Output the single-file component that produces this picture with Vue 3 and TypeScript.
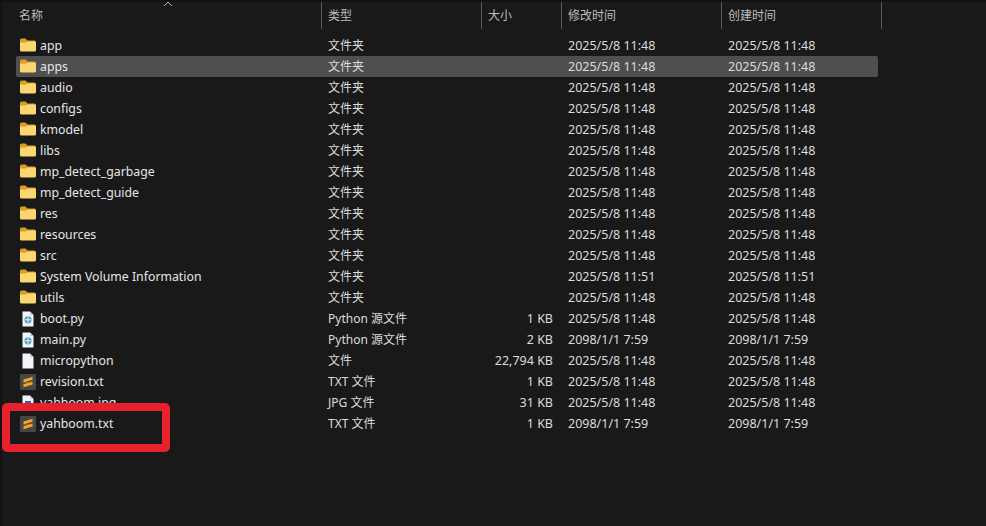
<script setup lang="ts">
type Kind = 'folder' | 'py' | 'file' | 'txt' | 'jpg'

interface Row {
  name: string
  kind: Kind
  type: string
  size?: string
  modified: string
  created: string
}

const stamp = '2025/5/8 11:48'
const old = '2098/1/1 7:59'

const folders = ['app', 'apps', 'audio', 'configs', 'kmodel', 'libs', 'mp_detect_garbage', 'mp_detect_guide', 'res', 'resources', 'src', 'System Volume Information', 'utils']

const rows: Row[] = [
  ...folders.map((name): Row => {
    const time = name.startsWith('System') ? '2025/5/8 11:51' : stamp
    return { name, kind: 'folder', type: '文件夹', modified: time, created: time }
  }),
  { name: 'boot.py', kind: 'py', type: 'Python 源文件', size: '1 KB', modified: stamp, created: stamp },
  { name: 'main.py', kind: 'py', type: 'Python 源文件', size: '2 KB', modified: old, created: old },
  { name: 'micropython', kind: 'file', type: '文件', size: '22,794 KB', modified: stamp, created: stamp },
  { name: 'revision.txt', kind: 'txt', type: 'TXT 文件', size: '1 KB', modified: stamp, created: stamp },
  { name: 'yahboom.jpg', kind: 'jpg', type: 'JPG 文件', size: '31 KB', modified: stamp, created: stamp },
  { name: 'yahboom.txt', kind: 'txt', type: 'TXT 文件', size: '1 KB', modified: old, created: old },
]

const columns = ['名称', '类型', '大小', '修改时间', '创建时间']
</script>

<template>
  <div class="explorer">
    <header class="head">
      <div v-for="col in columns" :key="col" class="head-cell">{{ col }}</div>
      <svg class="sort" width="10" height="6" viewBox="0 0 10 6" aria-hidden="true">
        <path d="M1 5 L5 1 L9 5" fill="none" stroke="#b0b0b0" stroke-width="1" />
      </svg>
    </header>

    <main class="list">
      <div v-for="row in rows" :key="row.name" class="row" :class="{ selected: row.name === 'apps' }">
        <div class="name">
          <svg class="icon" width="16" height="16" viewBox="0 0 16 16" aria-hidden="true">
            <template v-if="row.kind === 'folder'">
              <path d="M0 2 Q0 0.500 1.500 0.500 H5.500 L7.500 2.500 H14.500 Q16 2.500 16 4 V5 H0 Z" fill="#d99f22" />
              <path d="M0 4.500 L6 4.500 L7.500 3.500 H14.500 Q16 3.500 16 5 V12 Q16 13.500 14.500 13.500 H1.500 Q0 13.500 0 12 Z" fill="#fbd671" />
            </template>
            <template v-else-if="row.kind === 'txt'">
              <rect x="0" y="0" width="16" height="16" rx="1" fill="#474747" />
              <path d="M3.500 5.500 L12.500 2.800 V5.800 L3.500 8.500 Z" fill="#f5a428" />
              <path d="M3.500 8 L12.500 9 V10.500 L3.500 8.500 Z" fill="#b56f12" />
              <path d="M3.500 10.300 L12.500 7.500 V10.500 L3.500 13.300 Z" fill="#f5a428" />
            </template>
            <template v-else>
              <path d="M2.500 0.500 H10 L13.500 4 V15.500 H2.500 Z" fill="#f2f5f8" />
              <path d="M10 0.500 V4 H13.500 Z" fill="#c3ced8" />
              <template v-if="row.kind === 'py'">
                <circle cx="8" cy="8.800" r="3.600" fill="#4a9dbd" />
                <path d="M8 5.500 V12 M4.800 8.800 H11.200" stroke="#f2f5f8" stroke-width="1" />
              </template>
              <rect v-else-if="row.kind === 'jpg'" x="5" y="6" width="6" height="6" fill="#3d5fb0" />
            </template>
          </svg>
          <span>{{ row.name }}</span>
        </div>
        <div class="type">{{ row.type }}</div>
        <div class="size">{{ row.size }}</div>
        <div class="date">{{ row.modified }}</div>
        <div class="date">{{ row.created }}</div>
      </div>
    </main>

    <div class="mark" aria-hidden="true"></div>
  </div>
</template>

<style scoped>
.explorer {
  position: relative;
  width: 986px;
  height: 526px;
  overflow: hidden;
  background: #191919;
  box-shadow: inset 2px 2px 0 #121212;
  color: #dcdcdc;
  font-family: "Noto Sans", "Noto Sans CJK SC", sans-serif;
  font-size: 12.5px;
}

.head {
  position: relative;
  display: grid;
  grid-template-columns: 322px 160px 80px 160px 160px;
  height: 35px;
  padding-top: 2px;
  box-sizing: border-box;
}
.head-cell {
  height: 27px;
  line-height: 27px;
  padding-left: 6px;
  border-right: 1px solid #5a5a5a;
  color: #bdbdbd;
  font-size: 12px;
}
.head-cell:first-child { padding-left: 19px; }

.sort {
  position: absolute;
  left: 163px;
  top: 1px;
}

.list {
  margin-left: 16px;
  width: 862px;
}

.row {
  display: grid;
  grid-template-columns: 312px 160px 65px 175px 150px;
  height: 21px;
  line-height: 21px;
  white-space: nowrap;
}
.row.selected {
  background: #4f4f4f;
  border-radius: 2px;
}

.name {
  display: flex;
  align-items: center;
  gap: 4px;
  padding-left: 4px;
  color: #e6e6e6;
  font-size: 12.3px;
}
.icon { flex: none; }
.type { font-size: 12px; }
.size { text-align: right; }
.date { padding-left: 15px; }
.row > .date:last-child { padding-left: 0; }

.mark {
  position: absolute;
  left: 2px;
  top: 403px;
  width: 168px;
  height: 49px;
  box-sizing: border-box;
  border: 8px solid #e8202c;
  border-radius: 5px;
}
</style>
